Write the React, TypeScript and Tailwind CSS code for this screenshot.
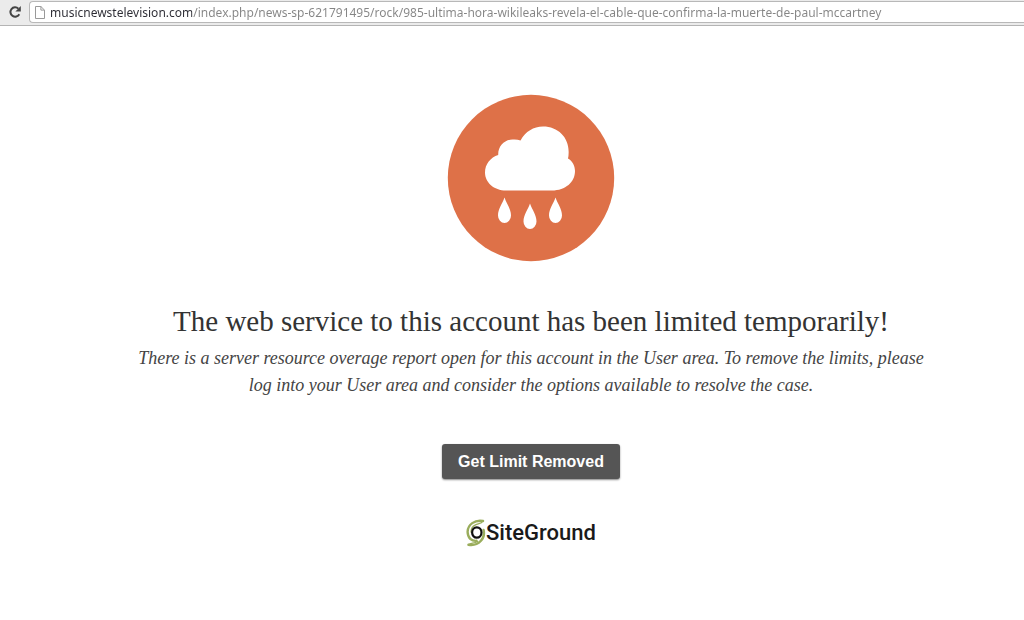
const PAGE_URL =
  "musicnewstelevision.com/index.php/news-sp-621791495/rock/985-ultima-hora-wikileaks-revela-el-cable-que-confirma-la-muerte-de-paul-mccartney";

const ReloadIcon = () => (
  <svg viewBox="0 0 14 14" className="h-[14px] w-[14px]" aria-hidden="true">
    <path d="M11.3 9.2A4.7 4.7 0 1 1 10.4 3.6" fill="none" stroke="#444" strokeWidth="2" />
    <path d="M12.8 1v5.4H7.4z" fill="#444" />
  </svg>
);

const FileIcon = () => (
  <svg viewBox="0 0 10 13" className="h-[13px] w-[10px] shrink-0" aria-hidden="true">
    <path d="M.5.5h5.4l3.6 3.6v8.4h-9z" fill="#fff" stroke="#999" />
    <path d="M5.9.5v3.6h3.6" fill="none" stroke="#999" />
  </svg>
);

const RainIcon = () => (
  <svg viewBox="0 0 168 168" className="h-[168px] w-[168px]" aria-hidden="true">
    <circle cx="84" cy="84" r="83.2" fill="#de7148" />
    <path
      d="M59 96.5C47 96.5 38 88.5 38 78.500C38 70 43.500 63.500 51.200 61C51 51.500 58 45.600 65.500 45.600Q70 45.200 73.500 46.500C78.500 37.500 86.500 32.500 96 32.500C111.500 32.500 122.500 44 121.600 59.500Q121.600 62.500 121 64.500C125.500 67 128 72 128 77C128 88 118.500 96.500 105 96.500Z"
      fill="#fff"
    />
    <g fill="#fff">
      <path d="M57.500 103.500C59.500 109.500 64 115 64 121.500A6.500 7.500 0 0 1 51 121.500C51 115 55.500 109.500 57.500 103.500Z" />
      <path d="M83 109.500C85 115.500 89.500 121 89.500 127.500A6.500 7.500 0 0 1 76.500 127.500C76.500 121 81 115.500 83 109.500Z" />
      <path d="M108.500 103.500C110.500 109.500 115 115 115 121.500A6.500 7.500 0 0 1 102 121.500C102 115 106.500 109.500 108.500 103.500Z" />
    </g>
  </svg>
);

const SwirlIcon = () => (
  <svg viewBox="0 0 20 28" className="h-7 w-5" aria-hidden="true">
    <g fill="none" strokeLinecap="round">
      <path d="M17 2C9 .5 1.500 5.500 1.600 13C1.800 19 5.500 22.200 10.500 21.800" stroke="#9aad5c" strokeWidth="2.400" />
      <path d="M17 2C15.500 5 12.500 4.500 9.500 5.800C6.500 7.200 5 10 5 13" stroke="#9aad5c" strokeWidth="1.300" />
      <path d="M17.600 11C19.500 19 13 27.500 2.500 25.800" stroke="#9aad5c" strokeWidth="2.400" />
      <path d="M2.500 25.800C4.500 23.500 8 24.800 11.500 22.500" stroke="#9aad5c" strokeWidth="1.300" />
      <ellipse cx="10.800" cy="13.500" rx="4.700" ry="5.200" stroke="#111" strokeWidth="2.200" />
    </g>
  </svg>
);

const AddressBar = () => (
  <header className="flex h-[26px] items-start border-b border-[#b4b4b4] bg-[#ebebeb]">
    <button type="button" aria-label="Reload" className="flex h-6 w-[29px] items-center justify-center">
      <ReloadIcon />
    </button>
    <div className="mt-px flex h-[22px] flex-1 items-center gap-[5px] rounded-l-sm border border-r-0 border-[#b8b8b8] bg-white pl-[5px]">
      <FileIcon />
      <input
        type="text"
        aria-label="Address"
        defaultValue={PAGE_URL}
        className="h-5 w-full bg-[linear-gradient(90deg,#2c2c34_142px,#858585_142px)] bg-clip-text font-['Noto_Sans',sans-serif] text-[12px] text-transparent outline-none"
      />
    </div>
  </header>
);

const App = () => (
  <div className="min-h-screen bg-white">
    <AddressBar />
    <main className="flex flex-col items-center pt-[68px] pl-[38px] text-center font-['Liberation_Serif',serif] text-[#333]">
      <RainIcon />
      <h1 className="mt-10 text-[29px] leading-[38px]">The web service to this account has been limited temporarily!</h1>
      <p className="mt-[5px] max-w-[800px] text-[18px] leading-[27px] text-[#444] italic">
        There is a server resource overage report open for this account in the User area. To remove the limits, please
        log into your User area and consider the options available to resolve the case.
      </p>
      <button
        type="button"
        className="mt-[45px] h-[35px] rounded-[3px] bg-[#555] px-4 font-['Liberation_Sans',sans-serif] text-base font-bold text-white shadow-[0_1px_2px_#888]"
      >
        Get Limit Removed
      </button>
      <a href="#" className="mt-10 flex items-center text-[#1a1a1a]">
        <SwirlIcon />
        <span className="font-['Roboto','Liberation_Sans',sans-serif] text-[22px] leading-7 font-medium">SiteGround</span>
      </a>
    </main>
  </div>
);

export default App;
